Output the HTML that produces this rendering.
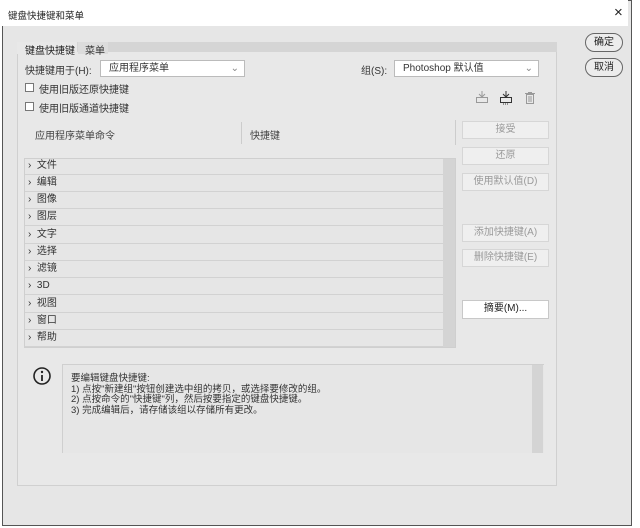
<!DOCTYPE html>
<html><head><meta charset="utf-8"><style>
*{box-sizing:border-box;margin:0;padding:0}
body{width:640px;height:528px;background:#fff;font-family:"Liberation Sans","Noto Sans CJK SC",sans-serif;font-size:10px;color:#333;position:relative;overflow:hidden}
.a{position:absolute}
.dlg{left:2px;top:0;width:630px;height:526px;border:1px solid #555;background:#e6e6e6}
.title{left:0;top:0;width:628px;height:26px;background:#fff}
.btn{position:absolute;background:#efefef;border:1px solid #d6d6d6;color:#9a9a9a;text-align:center;font-size:10px;line-height:16px}
.row{position:absolute;left:25px;width:418px;height:17px;border-bottom:1px solid #d2d2d2;font-size:10px;line-height:16px;padding-left:3px;color:#333}
.pill{position:absolute;left:585px;width:38px;height:19px;border:1px solid #666;border-radius:10px;background:#ececec;text-align:center;line-height:17px;font-size:10px;color:#222}
.cb{position:absolute;width:9px;height:9px;border:1px solid #777;background:#fff}
.sel{position:absolute;height:17px;background:#fff;border:1px solid #bbb;font-size:10px;line-height:15px;padding-left:8px}
</style></head><body>
<div class="a dlg"></div>
<div class="a title"></div>
<div class="a" style="left:8px;top:8px;font-size:9.5px;color:#222">键盘快捷键和菜单</div>
<div class="a" style="left:614px;top:4px;font-size:15px;color:#222">×</div>
<div class="pill" style="top:33px">确定</div>
<div class="pill" style="top:58px">取消</div>
<div class="a" style="left:17px;top:42px;width:540px;height:444px;border:1px solid #d0d0d0;border-top:none;background:#e8e8e8"></div>
<div class="a" style="left:17px;top:42px;width:540px;height:10px;background:#d5d5d5"></div>
<div class="a" style="left:17px;top:42px;width:60px;height:12px;background:#e8e8e8"></div>
<div class="a" style="left:78px;top:42px;width:30px;height:12px;background:#dcdcdc"></div>
<div class="a" style="left:25px;top:42px;color:#222">键盘快捷键</div>
<div class="a" style="left:85px;top:42px">菜单</div>
<div class="a" style="left:25px;top:62px">快捷键用于(H):</div>
<div class="sel" style="left:100px;top:60px;width:145px">应用程序菜单<span style="position:absolute;right:5px;color:#888">⌄</span></div>
<div class="a" style="left:361px;top:62px">组(S):</div>
<div class="sel" style="left:394px;top:60px;width:145px">Photoshop 默认值<span style="position:absolute;right:5px;color:#888">⌄</span></div>
<div class="cb" style="left:25px;top:83px"></div><div class="a" style="left:39px;top:81px">使用旧版还原快捷键</div>
<div class="cb" style="left:25px;top:102px"></div><div class="a" style="left:39px;top:100px">使用旧版通道快捷键</div>
<svg class="a" style="left:474px;top:90px" width="80" height="16"><g fill="none" stroke="#999"><rect x="2.5" y="7.5" width="11" height="5"/><path d="M8 1v6M5 4l3 3 3-3"/></g><g fill="none" stroke="#333"><rect x="26.5" y="7.5" width="11" height="5"/><path d="M32 1v6M29 4l3 3 3-3"/><path d="M29 14h6" stroke-dasharray="1 1"/></g><g fill="none" stroke="#999"><rect x="52.5" y="4.5" width="7" height="9"/><path d="M51 3.5h10M54 2.5h4M55 6v6M57 6v6"/></g></svg>
<div class="a" style="left:35px;top:127px;color:#444">应用程序菜单命令</div>
<div class="a" style="left:241px;top:122px;width:1px;height:22px;background:#ccc"></div>
<div class="a" style="left:250px;top:127px;color:#444">快捷键</div>
<div class="a" style="left:455px;top:120px;width:1px;height:25px;background:#ccc"></div>
<div class="a" style="left:24px;top:158px;width:432px;height:190px;border:1px solid #cfcfcf;background:#e6e6e6"></div>
<div class="a" style="left:443px;top:159px;width:12px;height:188px;background:#d4d4d4"></div>
<div class="row" style="top:158px">›&nbsp;&nbsp;文件</div>
<div class="row" style="top:175px">›&nbsp;&nbsp;编辑</div>
<div class="row" style="top:192px">›&nbsp;&nbsp;图像</div>
<div class="row" style="top:209px">›&nbsp;&nbsp;图层</div>
<div class="row" style="top:227px">›&nbsp;&nbsp;文字</div>
<div class="row" style="top:244px">›&nbsp;&nbsp;选择</div>
<div class="row" style="top:261px">›&nbsp;&nbsp;滤镜</div>
<div class="row" style="top:278px">›&nbsp;&nbsp;3D</div>
<div class="row" style="top:296px">›&nbsp;&nbsp;视图</div>
<div class="row" style="top:313px">›&nbsp;&nbsp;窗口</div>
<div class="row" style="top:330px">›&nbsp;&nbsp;帮助</div>
<div class="btn" style="left:462px;top:121px;width:87px;height:18px">接受</div>
<div class="btn" style="left:462px;top:147px;width:87px;height:18px">还原</div>
<div class="btn" style="left:462px;top:173px;width:87px;height:18px">使用默认值(D)</div>
<div class="btn" style="left:462px;top:224px;width:87px;height:18px">添加快捷键(A)</div>
<div class="btn" style="left:462px;top:249px;width:87px;height:18px">删除快捷键(E)</div>
<div class="btn" style="left:462px;top:300px;width:87px;height:19px;background:#fff;border-color:#c8c8c8;color:#222">摘要(M)...</div>
<svg class="a" style="left:32px;top:366px" width="20" height="20"><circle cx="10" cy="10" r="8" fill="none" stroke="#222" stroke-width="1.6"/><circle cx="10" cy="6" r="1.2" fill="#222"/><path d="M10 9v6" stroke="#222" stroke-width="1.8"/></svg>
<div class="a" style="left:62px;top:364px;width:482px;height:89px;border-left:1px solid #cfcfcf;border-top:1px solid #cfcfcf;background:#e6e6e6"></div>
<div class="a" style="left:532px;top:365px;width:11px;height:88px;background:#d4d4d4"></div>
<div class="a" style="left:71px;top:374px;line-height:10.5px;font-size:9.5px;color:#333">要编辑键盘快捷键:<br>1) 点按"新建组"按钮创建选中组的拷贝，或选择要修改的组。<br>2) 点按命令的"快捷键"列，然后按要指定的键盘快捷键。<br>3) 完成编辑后，请存储该组以存储所有更改。</div>
</body></html>
